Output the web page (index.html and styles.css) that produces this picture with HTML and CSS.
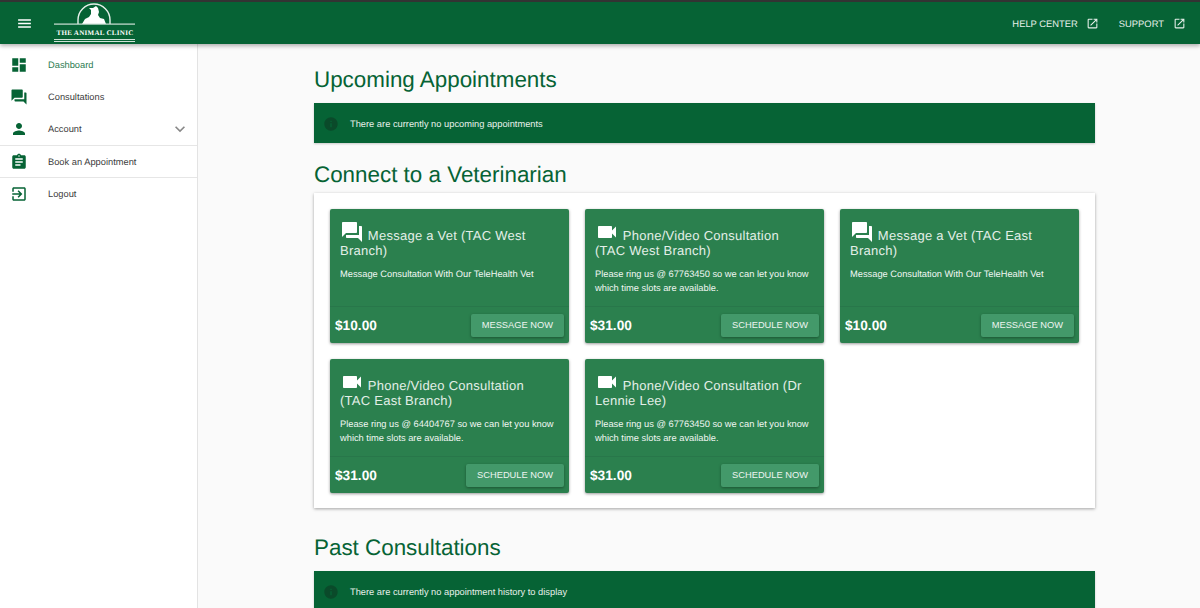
FILE: index.html
```html
<!DOCTYPE html>
<html>
<head>
	<title>The Animal Clinic - Dashboard</title>
	<meta charset="utf-8"/>
	<link rel="stylesheet" href="styles.css">
</head>
<body>

<header class="topbar">
	<div class="topbar-left">
		<svg class="menu-icon" viewBox="0 0 24 24"><path d="M3 18h18v-2H3v2zm0-5h18v-2H3v2zm0-7v2h18V6H3z"/></svg>
		<svg class="logo" viewBox="0 0 82 40">
			<path d="M24 21 V17 A16 16 0 0 1 56 17 V21" fill="none" stroke="#e6f0ea" stroke-width="1.4"/>
			<path d="M28 21 L31 16 L35 14 L37 11 L37 7 L35 5 L39 5 L42 3 L44 5 L45 9 L44 12 L46 15 L50 16 L52 21 Z" fill="#fff"/>
			<rect x="0" y="20.5" width="81" height="1.2" fill="#cfe2d7"/>
			<text class="logo-name" x="41" y="32" text-anchor="middle">THE ANIMAL CLINIC</text>
			<rect x="0" y="36" width="81" height="1" fill="#cfe2d7"/>
			<rect x="0" y="38" width="81" height="1" fill="#cfe2d7"/>
		</svg>
	</div>
	<nav class="toplinks">
		<a class="toplink">HELP CENTER <svg viewBox="0 0 24 24"><path d="M19 19H5V5h7V3H5a2 2 0 0 0-2 2v14a2 2 0 0 0 2 2h14c1.1 0 2-.9 2-2v-7h-2v7zM14 3v2h3.59l-9.83 9.83 1.41 1.41L19 6.41V10h2V3h-7z"/></svg></a>
		<a class="toplink">SUPPORT <svg viewBox="0 0 24 24"><path d="M19 19H5V5h7V3H5a2 2 0 0 0-2 2v14a2 2 0 0 0 2 2h14c1.1 0 2-.9 2-2v-7h-2v7zM14 3v2h3.59l-9.83 9.83 1.41 1.41L19 6.41V10h2V3h-7z"/></svg></a>
	</nav>
</header>

<div class="shell">
	<aside class="sidebar">
		<a class="nav-item active">
			<svg viewBox="0 0 24 24"><path d="M3 13h8V3H3v10zm0 8h8v-6H3v6zm10 0h8V11h-8v10zm0-18v6h8V3h-8z"/></svg>
			<span>Dashboard</span>
		</a>
		<a class="nav-item">
			<svg viewBox="0 0 24 24"><path d="M21 6h-2v9H6v2c0 .55.45 1 1 1h11l4 4V7c0-.55-.45-1-1-1zm-4 6V3c0-.55-.45-1-1-1H3c-.55 0-1 .45-1 1v14l4-4h10c.55 0 1-.45 1-1z"/></svg>
			<span>Consultations</span>
		</a>
		<a class="nav-item">
			<svg viewBox="0 0 24 24"><path d="M12 12c2.21 0 4-1.79 4-4s-1.79-4-4-4-4 1.79-4 4 1.79 4 4 4zm0 2c-2.67 0-8 1.34-8 4v2h16v-2c0-2.66-5.33-4-8-4z"/></svg>
			<span>Account</span>
			<svg class="chevron" viewBox="0 0 24 24"><path d="M16.59 8.59L12 13.17 7.41 8.59 6 10l6 6 6-6z"/></svg>
		</a>
		<a class="nav-item ruled">
			<svg viewBox="0 0 24 24"><path d="M19 3h-4.18C14.4 1.84 13.3 1 12 1c-1.3 0-2.4.84-2.82 2H5c-1.1 0-2 .9-2 2v14c0 1.1.9 2 2 2h14c1.1 0 2-.9 2-2V5c0-1.1-.9-2-2-2zm-7 0c.55 0 1 .45 1 1s-.45 1-1 1-1-.45-1-1 .45-1 1-1zm2 14H7v-2h7v2zm3-4H7v-2h10v2zm0-4H7V7h10v2z"/></svg>
			<span>Book an Appointment</span>
		</a>
		<a class="nav-item ruled">
			<svg viewBox="0 0 24 24"><path d="M10.09 15.59L11.5 17l5-5-5-5-1.41 1.41L12.67 11H3v2h9.67l-2.58 2.59zM19 3H5c-1.11 0-2 .9-2 2v4h2V5h14v14H5v-4H3v4c0 1.1.89 2 2 2h14c1.1 0 2-.9 2-2V5c0-1.1-.9-2-2-2z"/></svg>
			<span>Logout</span>
		</a>
	</aside>

	<main class="content">
		<h2>Upcoming Appointments</h2>
		<div class="notice">
			<svg viewBox="0 0 24 24"><path d="M12 2C6.48 2 2 6.48 2 12s4.48 10 10 10 10-4.48 10-10S17.52 2 12 2zm1 15h-2v-6h2v6zm0-8h-2V7h2v2z"/></svg>
			<span>There are currently no upcoming appointments</span>
		</div>

		<h2>Connect to a Veterinarian</h2>
		<section class="panel">
			<article class="card">
				<div class="card-body">
					<h3><svg viewBox="0 0 24 24"><path d="M21 6h-2v9H6v2c0 .55.45 1 1 1h11l4 4V7c0-.55-.45-1-1-1zm-4 6V3c0-.55-.45-1-1-1H3c-.55 0-1 .45-1 1v14l4-4h10c.55 0 1-.45 1-1z"/></svg> Message a Vet (TAC West Branch)</h3>
					<p>Message Consultation With Our TeleHealth Vet</p>
				</div>
				<div class="card-foot">
					<strong>$10.00</strong>
					<button>MESSAGE NOW</button>
				</div>
			</article>
			<article class="card">
				<div class="card-body">
					<h3><svg viewBox="0 0 24 24"><path d="M17 10.5V7c0-.55-.45-1-1-1H4c-.55 0-1 .45-1 1v10c0 .55.45 1 1 1h12c.55 0 1-.45 1-1v-3.5l4 4v-11l-4 4z"/></svg> Phone/Video Consultation (TAC West Branch)</h3>
					<p>Please ring us @ 67763450 so we can let you know which time slots are available.</p>
				</div>
				<div class="card-foot">
					<strong>$31.00</strong>
					<button>SCHEDULE NOW</button>
				</div>
			</article>
			<article class="card">
				<div class="card-body">
					<h3><svg viewBox="0 0 24 24"><path d="M21 6h-2v9H6v2c0 .55.45 1 1 1h11l4 4V7c0-.55-.45-1-1-1zm-4 6V3c0-.55-.45-1-1-1H3c-.55 0-1 .45-1 1v14l4-4h10c.55 0 1-.45 1-1z"/></svg> Message a Vet (TAC East Branch)</h3>
					<p>Message Consultation With Our TeleHealth Vet</p>
				</div>
				<div class="card-foot">
					<strong>$10.00</strong>
					<button>MESSAGE NOW</button>
				</div>
			</article>
			<article class="card">
				<div class="card-body">
					<h3><svg viewBox="0 0 24 24"><path d="M17 10.5V7c0-.55-.45-1-1-1H4c-.55 0-1 .45-1 1v10c0 .55.45 1 1 1h12c.55 0 1-.45 1-1v-3.5l4 4v-11l-4 4z"/></svg> Phone/Video Consultation (TAC East Branch)</h3>
					<p>Please ring us @ 64404767 so we can let you know which time slots are available.</p>
				</div>
				<div class="card-foot">
					<strong>$31.00</strong>
					<button>SCHEDULE NOW</button>
				</div>
			</article>
			<article class="card">
				<div class="card-body">
					<h3><svg viewBox="0 0 24 24"><path d="M17 10.5V7c0-.55-.45-1-1-1H4c-.55 0-1 .45-1 1v10c0 .55.45 1 1 1h12c.55 0 1-.45 1-1v-3.5l4 4v-11l-4 4z"/></svg> Phone/Video Consultation (Dr Lennie Lee)</h3>
					<p>Please ring us @ 67763450 so we can let you know which time slots are available.</p>
				</div>
				<div class="card-foot">
					<strong>$31.00</strong>
					<button>SCHEDULE NOW</button>
				</div>
			</article>
		</section>

		<h2>Past Consultations</h2>
		<div class="notice">
			<svg viewBox="0 0 24 24"><path d="M12 2C6.48 2 2 6.48 2 12s4.48 10 10 10 10-4.48 10-10S17.52 2 12 2zm1 15h-2v-6h2v6zm0-8h-2V7h2v2z"/></svg>
			<span>There are currently no appointment history to display</span>
		</div>
	</main>
</div>

</body>
</html>
```

FILE: styles.css
```css
* {
	box-sizing: border-box;
}

html, body {
	height: 100%;
}

body {
	margin: 0;
	display: flex;
	flex-direction: column;
	overflow: hidden;
	background: #fafafa;
	color: #333;
	font-family: "Liberation Sans", Arial, sans-serif;
	text-rendering: geometricPrecision;
}

.topbar {
	position: relative;
	z-index: 2;
	flex: none;
	height: 44px;
	display: flex;
	justify-content: space-between;
	align-items: center;
	padding-left: 16px;
	background: #066335;
	border-top: 2px solid #333;
	box-shadow: 0 2px 4px rgba(0,0,0,0.3);
	color: #fff;
}

.topbar-left {
	display: flex;
	align-items: center;
	gap: 21px;
}

.menu-icon {
	width: 17px;
	height: 17px;
	fill: #fff;
}

.logo {
	display: block;
	width: 82px;
	height: 40px;
}

.logo-name {
	font-family: "Liberation Serif", serif;
	font-size: 7px;
	font-weight: bold;
	letter-spacing: 0.3px;
	fill: #fff;
}

.toplinks {
	display: flex;
	gap: 19.5px;
	padding-right: 14.5px;
}

.toplink {
	display: flex;
	align-items: center;
	gap: 8.5px;
	font-size: 9.4px;
	color: #e6f0ea;
}

.toplink svg {
	width: 13px;
	height: 13px;
	fill: #e6f0ea;
}

.shell {
	flex: 1;
	display: flex;
	min-height: 0;
}

.sidebar {
	flex: none;
	width: 198px;
	padding-top: 5px;
	background: #fff;
	border-right: 1px solid #e3e3e3;
}

.nav-item {
	display: flex;
	align-items: center;
	height: 32px;
	padding-left: 10px;
	font-size: 9.3px;
	color: #3d3d3d;
}

.nav-item.ruled {
	border-top: 1px solid #e6e6e6;
}

.nav-item.active {
	color: #2b7a50;
}

.nav-item svg {
	flex: none;
	width: 18px;
	height: 18px;
	margin-right: 20px;
	fill: #066335;
}

.nav-item .chevron {
	width: 20px;
	height: 20px;
	margin: 0 7px 0 auto;
	fill: #888;
}

.content {
	flex: 1;
	min-width: 0;
	padding: 20px 105px 0 116px;
}

h2 {
	margin: 0;
	height: 30px;
	font-size: 22.4px;
	font-weight: normal;
	line-height: 32px;
	color: #066335;
}

.notice {
	display: flex;
	align-items: center;
	height: 40px;
	margin: 9px 0 16px;
	padding: 1px 0 0 9px;
	background: #066335;
	font-size: 9.3px;
	color: #e6f0ea;
	box-shadow: 0 1px 2px rgba(0,0,0,0.2);
}

.notice svg {
	width: 16px;
	height: 16px;
	margin-right: 11px;
	fill: #0a4a2a;
}

.panel {
	display: grid;
	grid-template-columns: repeat(3, 239px);
	gap: 16px;
	align-items: start;
	height: 315px;
	margin: 4px 0 24px;
	padding: 16px;
	background: #fff;
	box-shadow: 0 1px 3px rgba(0,0,0,0.35);
}

.card {
	height: 134px;
	display: flex;
	flex-direction: column;
	background: #2b804e;
	border-radius: 2px;
	box-shadow: 0 1px 3px rgba(0,0,0,0.4);
	color: #fff;
}

.card-body {
	flex: 1;
	padding: 11px 10px 0;
}

.card-body h3 {
	margin: 0;
	padding-right: 6px;
	font-size: 13px;
	font-weight: normal;
	line-height: 14px;
	letter-spacing: 0.25px;
	color: #e3efe8;
}

.card-body h3 svg {
	width: 24px;
	height: 24px;
	fill: #fff;
	vertical-align: -4px;
}

.card-body p {
	margin: 9px 0 0;
	font-size: 9.3px;
	line-height: 14px;
	color: #f1f7f3;
}

.card-foot {
	flex: none;
	height: 37px;
	display: flex;
	justify-content: space-between;
	align-items: center;
	padding: 0 5px;
	border-top: 1px solid #28774a;
}

.card-foot strong {
	font-size: 13.7px;
}

.card-foot button {
	height: 23px;
	padding: 0 11px;
	border: none;
	border-radius: 2px;
	background: #43996a;
	box-shadow: 0 1px 3px rgba(0,0,0,0.35);
	font-family: inherit;
	font-size: 9.3px;
	color: #eef5f1;
}
```
